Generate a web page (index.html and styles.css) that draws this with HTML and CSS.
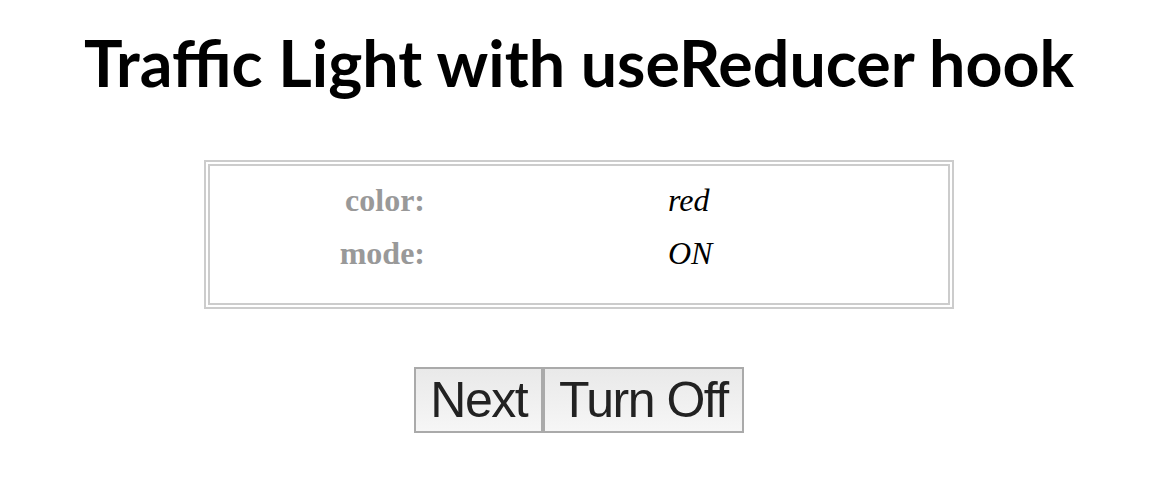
FILE: index.html
```html
<!DOCTYPE html>
<html lang="en">
<head>
<meta charset="utf-8">
<title>Traffic Light with useReducer hook</title>
<link rel="stylesheet" href="styles.css">
</head>
<body>
<div class="page">
  <h1 class="title">Traffic Light with useReducer hook</h1>
  <div class="state-box">
    <div class="state-grid">
      <span class="label">color:</span>
      <span class="value">red</span>
      <span class="label">mode:</span>
      <span class="value">ON</span>
    </div>
  </div>
  <div class="controls">
    <button class="btn" type="button">Next</button><button class="btn" type="button">Turn Off</button>
  </div>
</div>
</body>
</html>
```
FILE: styles.css
```css
html, body {
  margin: 0;
  padding: 0;
  background: #fff;
}

.page {
  margin-right: 10px;
  display: flex;
  flex-direction: column;
  align-items: center;
}

.title {
  margin: 24px 0 0;
  font-family: Lato, "Liberation Sans", sans-serif;
  font-weight: 700;
  font-size: 64.5px;
  line-height: 76px;
  color: #000;
  text-align: center;
}

.state-box {
  margin-top: 60px;
  width: 750px;
  box-sizing: border-box;
  border: 6px double #ccc;
  padding: 8px 0 23px;
}

.state-grid {
  display: grid;
  grid-template-columns: 215px 1fr;
  column-gap: 243px;
  font-family: "Liberation Serif", "Times New Roman", serif;
  font-size: 32px;
  line-height: 53px;
}

.label {
  text-align: right;
  font-weight: 700;
  color: #999;
}

.value {
  font-style: italic;
  color: #000;
}

.controls {
  margin-top: 58px;
  display: flex;
}

.btn {
  margin: 0;
  height: 66px;
  padding: 0 14px;
  border: 2px solid #aaa;
  border-radius: 0;
  background: linear-gradient(#e9e9e9, #f6f6f6);
  font-family: "Liberation Sans", Arial, sans-serif;
  font-size: 50px;
  letter-spacing: -1.5px;
  line-height: 1;
  color: #222;
}
```
